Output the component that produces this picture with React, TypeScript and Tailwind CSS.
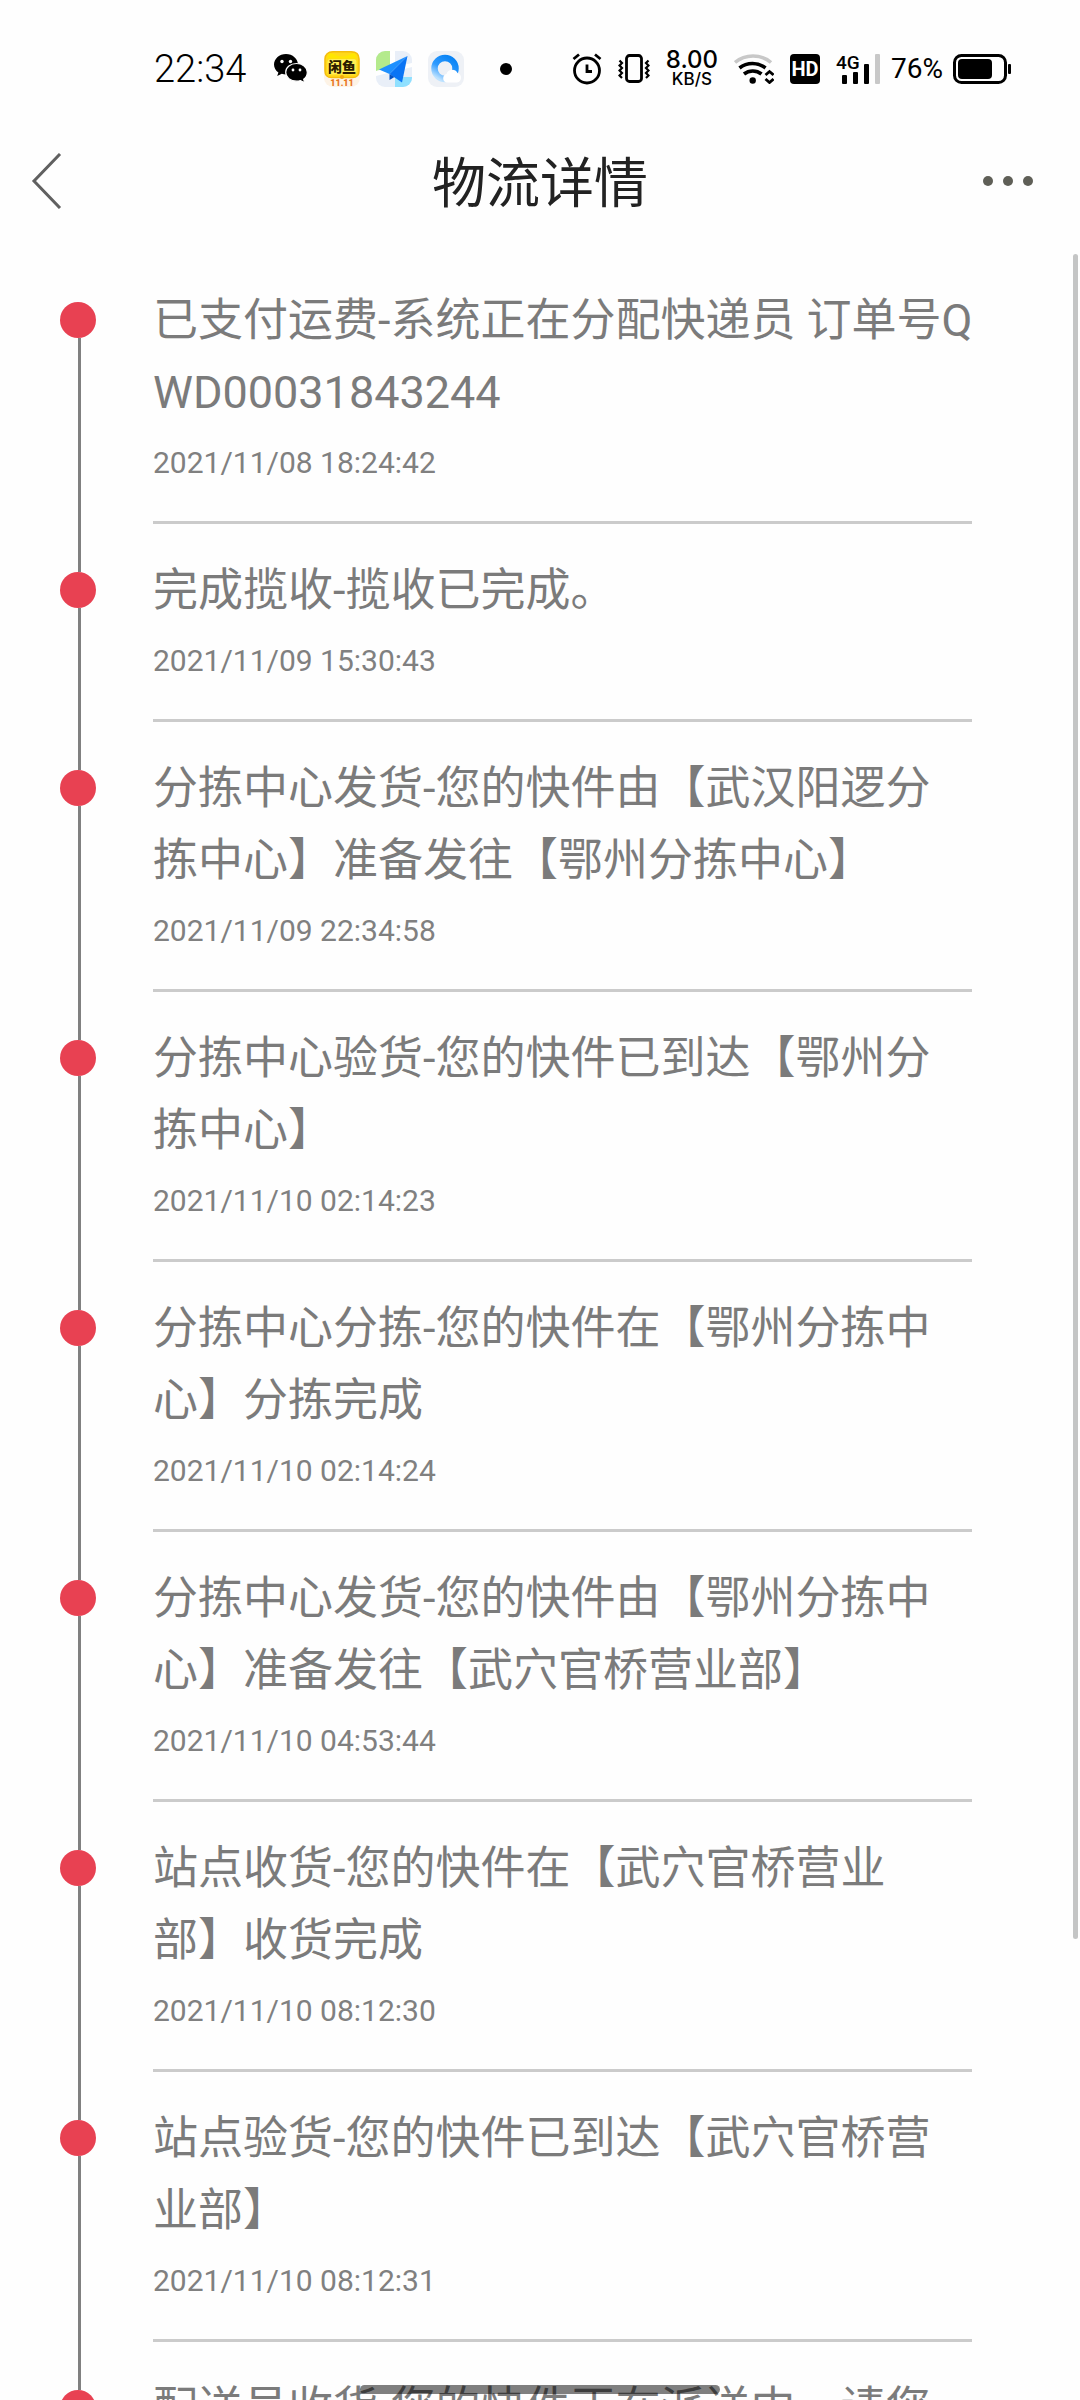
import { ReactNode } from 'react';

interface TrackEvent {
  text: string;
  time: string;
}

const EVENTS: TrackEvent[] = [
  { text: '已支付运费-系统正在分配快递员 订单号QWD00031843244', time: '2021/11/08 18:24:42' },
  { text: '完成揽收-揽收已完成。', time: '2021/11/09 15:30:43' },
  { text: '分拣中心发货-您的快件由【武汉阳逻分拣中心】准备发往【鄂州分拣中心】', time: '2021/11/09 22:34:58' },
  { text: '分拣中心验货-您的快件已到达【鄂州分拣中心】', time: '2021/11/10 02:14:23' },
  { text: '分拣中心分拣-您的快件在【鄂州分拣中心】分拣完成', time: '2021/11/10 02:14:24' },
  { text: '分拣中心发货-您的快件由【鄂州分拣中心】准备发往【武穴官桥营业部】', time: '2021/11/10 04:53:44' },
  { text: '站点收货-您的快件在【武穴官桥营业部】收货完成', time: '2021/11/10 08:12:30' },
  { text: '站点验货-您的快件已到达【武穴官桥营业部】', time: '2021/11/10 08:12:31' },
  { text: '配送员收货-您的快件正在派送中，请您准备签收', time: '2021/11/10 08:20:15' },
];

function WeChatIcon() {
  return (
    <svg width="34" height="30" viewBox="0 0 34 30">
      <path d="M12 0C5.400 0 0 4.700 0 10.500c0 3.300 1.700 6.100 4.400 8.100L3.200 22l4.600-2.200c1.300.4 2.700.6 4.200.6 6.600 0 12-4.400 12-9.900S18.600 0 12 0Z" />
      <path
        d="M22.500 9.500c-6 0-10.800 3.900-10.800 8.800s4.800 8.900 10.800 8.900c1.500 0 2.800-.2 4-.6l4.200 2.200-1-3.500c2.300-1.700 3.600-4.200 3.600-7 0-4.900-4.800-8.800-10.800-8.800Z"
        stroke="#fff"
        strokeWidth="1.200"
      />
      <g fill="#fff">
        <circle cx="8" cy="7.500" r="1.700" />
        <circle cx="16.500" cy="7.500" r="1.700" />
        <circle cx="19" cy="16" r="1.400" />
        <circle cx="26" cy="16" r="1.400" />
      </g>
    </svg>
  );
}

function XianyuIcon() {
  return (
    <svg width="36" height="36" viewBox="0 0 36 36">
      <rect width="36" height="36" rx="9" fill="#fdf3e6" />
      <path
        d="M9 .8h18c5 0 8 2.700 8 7.200v12c0 4-2.500 6.500-6.500 6.500h-21C3.500 26.500 1 24 1 20V8C1 3.500 4 .8 9 .8Z"
        fill="#ffd91a"
        stroke="#f5bd0c"
        strokeWidth="1.500"
      />
      <path d="M5 2.500c4-1.500 6 3 13 3s9-4.500 13-3l2 5H3Z" fill="#ffe600" />
      <rect x="3.500" y="8" width="29" height="15.500" rx="3" fill="#ffee55" />
      <text x="18" y="21" textAnchor="middle" fontSize="14" fontWeight="900" fill="#2a1c00" fontFamily="'Noto Sans CJK SC', sans-serif">
        闲鱼
      </text>
      <circle cx="18" cy="26" r="2" fill="#f0a810" />
      <text x="18" y="35" textAnchor="middle" fontSize="9" fontWeight="900" fill="#e8751a" fontFamily="Roboto, sans-serif">
        11.11
      </text>
    </svg>
  );
}

function MapIcon() {
  return (
    <svg width="36" height="36" viewBox="0 0 36 36">
      <clipPath id="map-clip">
        <rect width="36" height="36" rx="9" />
      </clipPath>
      <g clipPath="url(#map-clip)">
        <rect width="36" height="36" fill="#e9eff8" />
        <path d="M0 0h14v16L0 20Z" fill="#b4ea8c" />
        <path d="M14 0h5v14l-5 3ZM0 20l36-8v4L0 25Z" fill="#fff" />
        <path d="M19 26h17v10H19Z" fill="#8fe0ff" />
      </g>
      <path d="M31.500 5 3 18.500l10.500 4.500Z" fill="#1e90ff" />
      <path d="M31.500 5 13.500 23 26 31.500Z" fill="#0a74f5" />
      <path d="M13.500 23v6l5-3Z" fill="#0553c4" />
    </svg>
  );
}

function QqBrowserIcon() {
  return (
    <svg width="36" height="36" viewBox="0 0 36 36">
      <defs>
        <linearGradient id="ring" x1="0.800" y1="0" x2="0.200" y2="1">
          <stop offset="0" stopColor="#0a84f5" />
          <stop offset="0.550" stopColor="#2f9bff" />
          <stop offset="1" stopColor="#bfe3ff" />
        </linearGradient>
      </defs>
      <rect width="36" height="36" rx="9" fill="#eef1f6" />
      <circle cx="17" cy="17.500" r="10.500" fill="none" stroke="url(#ring)" strokeWidth="6.500" />
      <path d="M18 31.500a4.500 4.500 0 0 1 .5-8.500 6 6 0 0 1 11-1A4.900 4.900 0 0 1 29 31.500Z" fill="#fff" />
    </svg>
  );
}

function AlarmIcon() {
  return (
    <svg width="30" height="32" viewBox="0 0 30 32" fill="none" stroke="#000" strokeWidth="2.800">
      <circle cx="15" cy="17.500" r="12.500" />
      <path d="M15 11.500v7h5" />
      <path d="M1.500 6 7 1.500M28.500 6 23 1.500" />
    </svg>
  );
}

function VibrateIcon() {
  return (
    <svg width="32" height="30" viewBox="0 0 32 30" fill="none" stroke="#000" strokeWidth="2.800">
      <rect x="8.500" y="1.500" width="15" height="26" rx="3" />
      <path
        d="M1.500 6.500 4 9l-2.500 2.500L4 14l-2.500 2.500L4 19l-2.500 2.500L4 24M30.500 6.500 28 9l2.500 2.500L28 14l2.500 2.500L28 19l2.500 2.500L28 24"
        strokeWidth="2.200"
      />
    </svg>
  );
}

function WifiIcon() {
  return (
    <svg width="40" height="30" viewBox="0 0 40 30" fill="none" stroke="#000" strokeWidth="3.600">
      <path d="M1 8.500c10-8.600 26-8.600 36 0" stroke="#c8c8c8" />
      <path d="M5.500 14c7.500-6 18.500-6 26 0" />
      <path d="M10 20c5-4 12.500-4 17.500 0" />
      <circle cx="18.700" cy="26.500" r="3.200" fill="#000" stroke="none" />
      <path d="m31.500 21 4-3.500 4 3.500M31.500 25l4 3.500 4-3.500" strokeWidth="2.800" />
    </svg>
  );
}

function SignalIcon() {
  return (
    <svg width="45" height="30" viewBox="0 0 45 30" className="overflow-visible">
      <text x="0" y="15" fontSize="19" fontWeight="500" fontFamily="Roboto, sans-serif">
        4G
      </text>
      <rect x="6" y="21" width="5" height="9" rx="1" />
      <rect x="17" y="18" width="5" height="12" rx="1" />
      <rect x="28" y="10" width="5" height="20" rx="1" />
      <rect x="39" y="0" width="5" height="30" rx="1" fill="#c8c8c8" />
    </svg>
  );
}

function BatteryIcon() {
  return (
    <svg width="58" height="30" viewBox="0 0 58 30">
      <rect x="1.500" y="1.500" width="51" height="27" rx="7" fill="none" stroke="#000" strokeWidth="3" />
      <rect x="5" y="5" width="34" height="20" rx="4" />
      <rect x="55" y="10" width="3" height="10" rx="1" />
    </svg>
  );
}

function StatusBar() {
  return (
    <div className="flex h-28 shrink-0 items-center justify-between pt-[26px] pr-[69px] pl-[154px] text-black">
      <div className="flex items-center gap-4">
        <span className="mr-3 text-[38px] leading-10 font-light">22:34</span>
        <WeChatIcon />
        <XianyuIcon />
        <MapIcon />
        <QqBrowserIcon />
        <span className="ml-5 size-3 rounded-full bg-black" />
      </div>
      <div className="flex items-center gap-4">
        <AlarmIcon />
        <VibrateIcon />
        <div className="flex flex-col items-center font-[Inter] font-medium">
          <span className="text-[24px] leading-5">8.00</span>
          <span className="text-[17px] leading-[18px]">KB/S</span>
        </div>
        <WifiIcon />
        <span className="flex size-[30px] items-center justify-center rounded bg-black text-[20px] font-bold text-white">
          HD
        </span>
        <div className="flex items-center gap-[10px]">
          <SignalIcon />
          <span className="text-[28px] leading-8">76%</span>
          <BatteryIcon />
        </div>
      </div>
    </div>
  );
}

function Header({ children }: { children: ReactNode }) {
  return (
    <header className="flex h-[142px] shrink-0 items-center justify-between px-[30px] pb-1">
      <button aria-label="返回" className="w-24">
        <svg width="32" height="56" viewBox="0 0 32 56" fill="none" stroke="#606060" strokeWidth="3">
          <path d="M30 1 4 28l26 27" />
        </svg>
      </button>
      <h1 className="pt-2 text-[54px] leading-[72px] text-[#222]">{children}</h1>
      <button aria-label="更多" className="flex w-24 justify-end gap-[10px] pr-[17px]">
        <span className="size-[10px] rounded-full bg-[#5f5f57]" />
        <span className="size-[10px] rounded-full bg-[#5f5f57]" />
        <span className="size-[10px] rounded-full bg-[#5f5f57]" />
      </button>
    </header>
  );
}

function TimelineItem({ event, isFirst }: { event: TrackEvent; isFirst: boolean }) {
  return (
    <li className="flex">
      {/* Rail: dot sits on the first text line */}
      <div className="flex w-9 shrink-0 flex-col">
        <div className={`ml-[18px] h-12 w-[3px] shrink-0 ${isFirst ? '' : 'bg-[#808080]'}`} />
        <div className="size-9 shrink-0 rounded-full bg-[#e84152]" />
        <div className="ml-[18px] w-[3px] flex-1 bg-[#808080]" />
      </div>
      <div className="ml-[57px] flex-1 border-b-3 border-[#cbcbcb] pt-[31px] pb-[38px]">
        <p className="-mr-px text-[45px] leading-[72px] break-all text-[#7b7b7b] [text-spacing-trim:space-all]">
          {event.text}
        </p>
        <time className="mt-[14px] block text-[30px] leading-10 text-[#808080]">{event.time}</time>
      </div>
    </li>
  );
}

export default function App() {
  return (
    <div className="relative flex h-screen flex-col overflow-hidden bg-[#fefefe] font-[Roboto,'Noto_Sans_CJK_SC',sans-serif]">
      <StatusBar />
      <Header>物流详情</Header>
      <main className="relative min-h-0 flex-1 overflow-hidden">
        <ul className="pr-[108px] pl-[60px]">
          {EVENTS.map((event, i) => (
            <TimelineItem key={event.time} event={event} isFirst={i === 0} />
          ))}
        </ul>
        {/* Scroll thumb */}
        <div className="absolute top-0 right-[2px] h-[1685px] w-[5px] rounded-full bg-[#c4c5c5]" />
      </main>
      {/* Gesture bar */}
      <div className="absolute bottom-[6px] left-1/2 h-[9px] w-1/3 -translate-x-1/2 rounded-full bg-black/50" />
    </div>
  );
}
